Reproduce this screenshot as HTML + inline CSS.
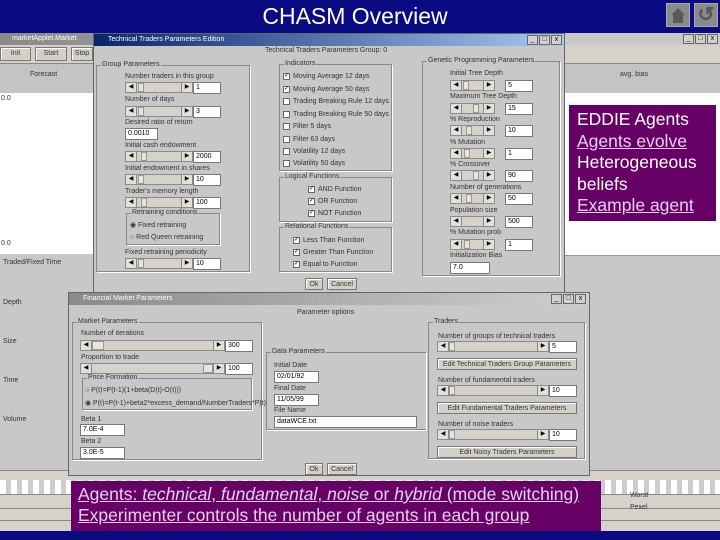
<!DOCTYPE html>
<html><head><meta charset="utf-8"><style>
*{margin:0;padding:0;box-sizing:border-box}
body{width:720px;height:540px;overflow:hidden;position:relative;background:#c8c8c8;font-family:"Liberation Sans",sans-serif;font-size:7px;color:#333}
div,span{position:absolute}
.t{white-space:nowrap;font-size:7px;color:#333}
.sl{height:11px;background:#d6d2ca;border:1px solid #8a8a8a}
.sl:before{content:"\25C0";position:absolute;left:0;top:0;width:10px;height:9px;background:#e4e0d8;border-right:1px solid #888;font-size:6px;line-height:9px;text-align:center;color:#000}
.sl:after{content:"\25B6";position:absolute;right:0;top:0;width:10px;height:9px;background:#e4e0d8;border-left:1px solid #888;font-size:6px;line-height:9px;text-align:center;color:#000}
.th{top:0;height:9px;width:6px;background:#e8e4dc;border:1px solid #999}
.tf{height:12px;background:#fff;border:1px solid #777;font-size:7px;line-height:10px;padding-left:2px;color:#000}
.box{border:1px solid #888;box-shadow:1px 1px 0 #fff}
.lg{background:#c8c8c8;padding:0 1px;top:-5px;left:4px;white-space:nowrap;font-size:7px}
.cb{width:7px;height:7px;background:#fff;border:1px solid #666;font-size:6px;line-height:5px;color:#000;text-align:center}
.btn{background:#d4d0c8;border:1px solid #777;box-shadow:inset 1px 1px 0 #fff;font-size:7px;text-align:center;line-height:11px;white-space:nowrap}
.wb{width:11px;height:10px;background:#d4d0c8;border:1px solid #666;font-size:7px;line-height:8px;text-align:center;color:#000}
</style></head><body>
<!-- banner -->
<div style="left:0;top:0;width:720px;height:33px;background:#0a0a82"></div>
<div style="left:0;top:2px;width:710px;text-align:center;color:#fff;font-size:23px;line-height:28px">CHASM Overview</div>
<div style="left:666px;top:3px;width:24px;height:24px;background:#8a8a8a;border:1px solid #aaa"></div>
<div style="left:671px;top:8px;width:0;height:0;border-left:7px solid transparent;border-right:7px solid transparent;border-bottom:7px solid #5a5a5a"></div>
<div style="left:673px;top:15px;width:10px;height:8px;background:#5a5a5a"></div>
<div style="left:694px;top:3px;width:24px;height:24px;background:#8a8a8a;border:1px solid #aaa;color:#555;font-size:20px;line-height:22px;text-align:center;font-weight:bold">&#8634;</div>

<!-- background applet -->
<div style="left:0;top:33px;width:720px;height:12px;background:linear-gradient(90deg,#8a8a8a,#d0d0d0)"></div>
<div class="t" style="left:12px;top:35px;color:#fff">marketApplet.Market</div>
<div style="left:0;top:45px;width:720px;height:18px;background:#d6d2ca"></div>
<div class="btn" style="left:0;top:47px;width:31px;height:14px">Init</div>
<div class="btn" style="left:35px;top:47px;width:32px;height:14px">Start</div>
<div class="btn" style="left:71px;top:47px;width:22px;height:14px">Stop</div>
<div style="left:0;top:63px;width:720px;height:30px;background:#c4c4c4;border-top:1px solid #888"></div>
<div class="t" style="left:30px;top:71px">Forecast</div>
<div class="t" style="left:620px;top:71px">avg. bias</div>
<div style="left:0;top:93px;width:93px;height:161px;background:#fff"></div>
<div class="t" style="left:1px;top:95px">0.0</div>
<div class="t" style="left:1px;top:240px">0.0</div>
<div style="left:565px;top:93px;width:155px;height:162px;background:#fff"></div>
<div style="left:565px;top:255px;width:155px;height:1px;background:#999"></div>
<div style="left:565px;top:33px;width:155px;height:12px;background:#c8c8c8"></div>
<div class="wb" style="left:683px;top:34px">_</div><div class="wb" style="left:695px;top:34px">&#9633;</div><div class="wb" style="left:707px;top:34px">x</div>
<div class="t" style="left:3px;top:259px">Traded/Fixed Time</div>
<div class="t" style="left:3px;top:299px">Depth</div>
<div class="t" style="left:3px;top:338px">Size</div>
<div class="t" style="left:3px;top:377px">Time</div>
<div class="t" style="left:3px;top:416px">Volume</div>
<div style="left:0;top:470px;width:720px;height:62px;background:#d6d2ca"></div>
<div style="left:0;top:470px;width:720px;height:1px;background:#888"></div>
<div style="left:0;top:480px;width:720px;height:14px;background:repeating-linear-gradient(90deg,#fff 0 6px,#ccc 6px 11px)"></div>
<div style="left:0;top:494px;width:720px;height:1px;background:#888"></div>
<div style="left:0;top:508px;width:720px;height:1px;background:#888"></div>
<div style="left:0;top:520px;width:720px;height:1px;background:#888"></div>
<div class="t" style="left:630px;top:492px">Worst</div>
<div class="t" style="left:630px;top:504px">Pexel</div>
<div style="left:0;top:531px;width:720px;height:9px;background:#0a0a82"></div>

<!-- Technical traders window -->
<div style="left:93px;top:33px;width:472px;height:260px;background:#c8c8c8;border:1px solid #666"></div>
<div style="left:94px;top:34px;width:470px;height:12px;background:linear-gradient(90deg,#0a246a,#a6caf0)"></div>
<div class="t" style="left:108px;top:36px;color:#fff">Technical Traders Parameters Edition</div>
<div class="wb" style="left:527px;top:35px">_</div><div class="wb" style="left:539px;top:35px">&#9633;</div><div class="wb" style="left:551px;top:35px">x</div>
<div class="t" style="left:265px;top:47px">Technical Traders Parameters Group: 0</div>

<div class="box" style="left:96px;top:65px;width:154px;height:207px"><span class="lg">Group Parameters</span></div>
<div class="t" style="left:125px;top:73px">Number traders in this group</div>
<div class="sl" style="left:125px;top:82px;width:68px"><span class="th" style="left:12px"></span></div><div class="tf" style="left:193px;top:82px;width:28px">1</div>
<div class="t" style="left:125px;top:96px">Number of days</div>
<div class="sl" style="left:125px;top:106px;width:68px"><span class="th" style="left:12px"></span></div><div class="tf" style="left:193px;top:106px;width:28px">3</div>
<div class="t" style="left:125px;top:119px">Desired ratio of return</div>
<div class="tf" style="left:125px;top:128px;width:33px">0.0010</div>
<div class="t" style="left:125px;top:142px">Initial cash endowment</div>
<div class="sl" style="left:125px;top:151px;width:68px"><span class="th" style="left:15px"></span></div><div class="tf" style="left:193px;top:151px;width:28px">2000</div>
<div class="t" style="left:125px;top:165px">Initial endowment in shares</div>
<div class="sl" style="left:125px;top:174px;width:68px"><span class="th" style="left:12px"></span></div><div class="tf" style="left:193px;top:174px;width:28px">10</div>
<div class="t" style="left:125px;top:188px">Trader's memory length</div>
<div class="sl" style="left:125px;top:197px;width:68px"><span class="th" style="left:15px"></span></div><div class="tf" style="left:193px;top:197px;width:28px">100</div>
<div class="box" style="left:126px;top:213px;width:94px;height:32px"><span class="lg">Retraining conditions</span></div>
<div class="t" style="left:130px;top:221px">&#9673; Fixed retraining</div>
<div class="t" style="left:130px;top:234px">&#9675; Red Queen retraining</div>
<div class="t" style="left:125px;top:249px">Fixed retraining periodicity</div>
<div class="sl" style="left:125px;top:258px;width:68px"><span class="th" style="left:12px"></span></div><div class="tf" style="left:193px;top:258px;width:28px">10</div>

<div class="box" style="left:279px;top:64px;width:113px;height:107px"><span class="lg">Indicators</span></div>
<span class="cb" style="left:283px;top:73px">&#10003;</span><span class="t" style="left:293px;top:73px">Moving Average 12 days</span>
<span class="cb" style="left:283px;top:86px">&#10003;</span><span class="t" style="left:293px;top:86px">Moving Average 50 days</span>
<span class="cb" style="left:283px;top:98px"></span><span class="t" style="left:293px;top:98px">Trading Breaking Rule 12 days</span>
<span class="cb" style="left:283px;top:111px"></span><span class="t" style="left:293px;top:111px">Trading Breaking Rule 50 days</span>
<span class="cb" style="left:283px;top:123px"></span><span class="t" style="left:293px;top:123px">Filter 5 days</span>
<span class="cb" style="left:283px;top:136px"></span><span class="t" style="left:293px;top:136px">Filter 63 days</span>
<span class="cb" style="left:283px;top:148px"></span><span class="t" style="left:293px;top:148px">Volatility 12 days</span>
<span class="cb" style="left:283px;top:160px"></span><span class="t" style="left:293px;top:160px">Volatility 50 days</span>
<div class="box" style="left:279px;top:177px;width:113px;height:45px"><span class="lg">Logical Functions</span></div>
<span class="cb" style="left:308px;top:186px">&#10003;</span><span class="t" style="left:318px;top:186px">AND Function</span>
<span class="cb" style="left:308px;top:198px">&#10003;</span><span class="t" style="left:318px;top:198px">OR Function</span>
<span class="cb" style="left:308px;top:210px">&#10003;</span><span class="t" style="left:318px;top:210px">NOT Function</span>
<div class="box" style="left:279px;top:227px;width:113px;height:45px"><span class="lg">Relational Functions</span></div>
<span class="cb" style="left:293px;top:237px">&#10003;</span><span class="t" style="left:303px;top:237px">Less Than Function</span>
<span class="cb" style="left:293px;top:249px">&#10003;</span><span class="t" style="left:303px;top:249px">Greater Than Function</span>
<span class="cb" style="left:293px;top:261px">&#10003;</span><span class="t" style="left:303px;top:261px">Equal to Function</span>
<div class="btn" style="left:305px;top:278px;width:18px;height:12px">Ok</div>
<div class="btn" style="left:327px;top:278px;width:30px;height:12px">Cancel</div>

<div class="box" style="left:422px;top:61px;width:138px;height:215px"><span class="lg">Genetic Programming Parameters</span></div>
<div class="t" style="left:450px;top:70px">Initial Tree Depth</div>
<div class="sl" style="left:450px;top:80px;width:45px"><span class="th" style="left:12px"></span></div><div class="tf" style="left:505px;top:80px;width:28px">5</div>
<div class="t" style="left:450px;top:93px">Maximum Tree Depth</div>
<div class="sl" style="left:450px;top:103px;width:45px"><span class="th" style="left:22px"></span></div><div class="tf" style="left:505px;top:103px;width:28px">15</div>
<div class="t" style="left:450px;top:116px">% Reproduction</div>
<div class="sl" style="left:450px;top:125px;width:45px"><span class="th" style="left:15px"></span></div><div class="tf" style="left:505px;top:125px;width:28px">10</div>
<div class="t" style="left:450px;top:139px">% Mutation</div>
<div class="sl" style="left:450px;top:148px;width:45px"><span class="th" style="left:13px"></span></div><div class="tf" style="left:505px;top:148px;width:28px">1</div>
<div class="t" style="left:450px;top:161px">% Crossover</div>
<div class="sl" style="left:450px;top:170px;width:45px"><span class="th" style="left:22px"></span></div><div class="tf" style="left:505px;top:170px;width:28px">90</div>
<div class="t" style="left:450px;top:184px">Number of generations</div>
<div class="sl" style="left:450px;top:193px;width:45px"><span class="th" style="left:15px"></span></div><div class="tf" style="left:505px;top:193px;width:28px">50</div>
<div class="t" style="left:450px;top:207px">Population size</div>
<div class="sl" style="left:450px;top:216px;width:45px"><span class="th" style="left:32px"></span></div><div class="tf" style="left:505px;top:216px;width:28px">500</div>
<div class="t" style="left:450px;top:229px">% Mutation prob</div>
<div class="sl" style="left:450px;top:239px;width:45px"><span class="th" style="left:13px"></span></div><div class="tf" style="left:505px;top:239px;width:28px">1</div>
<div class="t" style="left:450px;top:252px">Initialization Bias</div>
<div class="tf" style="left:450px;top:262px;width:40px">7.0</div>

<!-- EDDIE box -->
<div style="left:569px;top:105px;width:147px;height:116px;background:#660066"></div>
<div style="left:577px;top:109px;color:#fff;font-size:17.5px;line-height:21.6px;white-space:nowrap">EDDIE Agents<br><u style="color:#e8d0f0">Agents evolve</u><br>Heterogeneous<br>beliefs<br><u style="color:#e8d0f0">Example agent</u></div>

<!-- Financial market window -->
<div style="left:68px;top:292px;width:522px;height:184px;background:#c8c8c8;border:1px solid #666"></div>
<div style="left:69px;top:293px;width:520px;height:12px;background:linear-gradient(90deg,#8a8a8a,#d0d0d0)"></div>
<div class="t" style="left:83px;top:295px;color:#fff">Financial Market Parameters</div>
<div class="wb" style="left:551px;top:294px">_</div><div class="wb" style="left:563px;top:294px">&#9633;</div><div class="wb" style="left:575px;top:294px">x</div>
<div class="t" style="left:297px;top:309px">Parameter options</div>
<div class="box" style="left:72px;top:322px;width:190px;height:138px"><span class="lg">Market Parameters</span></div>
<div class="t" style="left:81px;top:330px">Number of iterations</div>
<div class="sl" style="left:80px;top:340px;width:145px"><span class="th" style="left:11px;width:12px"></span></div><div class="tf" style="left:225px;top:340px;width:28px">300</div>
<div class="t" style="left:81px;top:354px">Proportion to trade</div>
<div class="sl" style="left:80px;top:363px;width:145px"><span class="th" style="left:122px;width:10px"></span></div><div class="tf" style="left:225px;top:363px;width:28px">100</div>
<div class="box" style="left:82px;top:378px;width:170px;height:32px"><span class="lg">Price Formation</span></div>
<div class="t" style="left:85px;top:387px">&#9675; P(t)=P(t-1)(1+beta(D(t)-O(t)))</div>
<div class="t" style="left:85px;top:399px">&#9673; P(t)=P(t-1)+beta2*excess_demand/NumberTraders*P(t)</div>
<div class="t" style="left:81px;top:416px">Beta 1</div>
<div class="tf" style="left:80px;top:424px;width:45px">7.0E-4</div>
<div class="t" style="left:81px;top:438px">Beta 2</div>
<div class="tf" style="left:80px;top:447px;width:45px">3.0E-5</div>
<div class="box" style="left:266px;top:352px;width:160px;height:78px;border-right:none"><span class="lg">Data Parameters</span></div>
<div class="t" style="left:274px;top:362px">Initial Date</div>
<div class="tf" style="left:274px;top:371px;width:45px">02/01/92</div>
<div class="t" style="left:274px;top:385px">Final Date</div>
<div class="tf" style="left:274px;top:394px;width:45px">11/05/99</div>
<div class="t" style="left:274px;top:407px">File Name</div>
<div class="tf" style="left:274px;top:416px;width:143px">dataWCE.txt</div>
<div class="box" style="left:428px;top:322px;width:157px;height:137px"><span class="lg">Traders</span></div>
<div class="t" style="left:438px;top:333px">Number of groups of technical traders</div>
<div class="sl" style="left:437px;top:341px;width:112px"><span class="th" style="left:11px"></span></div><div class="tf" style="left:549px;top:341px;width:28px">5</div>
<div class="btn" style="left:437px;top:358px;width:140px;height:12px">Edit Technical Traders Group Parameters</div>
<div class="t" style="left:438px;top:377px">Number of fundamental traders</div>
<div class="sl" style="left:437px;top:385px;width:112px"><span class="th" style="left:11px"></span></div><div class="tf" style="left:549px;top:385px;width:28px">10</div>
<div class="btn" style="left:437px;top:402px;width:140px;height:12px">Edit Fundamental Traders Parameters</div>
<div class="t" style="left:438px;top:421px">Number of noise traders</div>
<div class="sl" style="left:437px;top:429px;width:112px"><span class="th" style="left:11px"></span></div><div class="tf" style="left:549px;top:429px;width:28px">10</div>
<div class="btn" style="left:437px;top:446px;width:140px;height:12px">Edit Noisy Traders Parameters</div>
<div class="btn" style="left:305px;top:463px;width:18px;height:12px">Ok</div>
<div class="btn" style="left:327px;top:463px;width:30px;height:12px">Cancel</div>

<!-- bottom purple box -->
<div style="left:71px;top:481px;width:530px;height:50px;background:#660066"></div>
<div style="left:78px;top:484px;color:#e8d0f0;font-size:17.5px;line-height:21px;white-space:nowrap"><u>Agents: <i>technical</i>, <i>fundamental</i>, <i>noise</i> or <i>hybrid</i> (mode switching)</u><br><u>Experimenter controls the number of agents in each group</u></div>
</body></html>
